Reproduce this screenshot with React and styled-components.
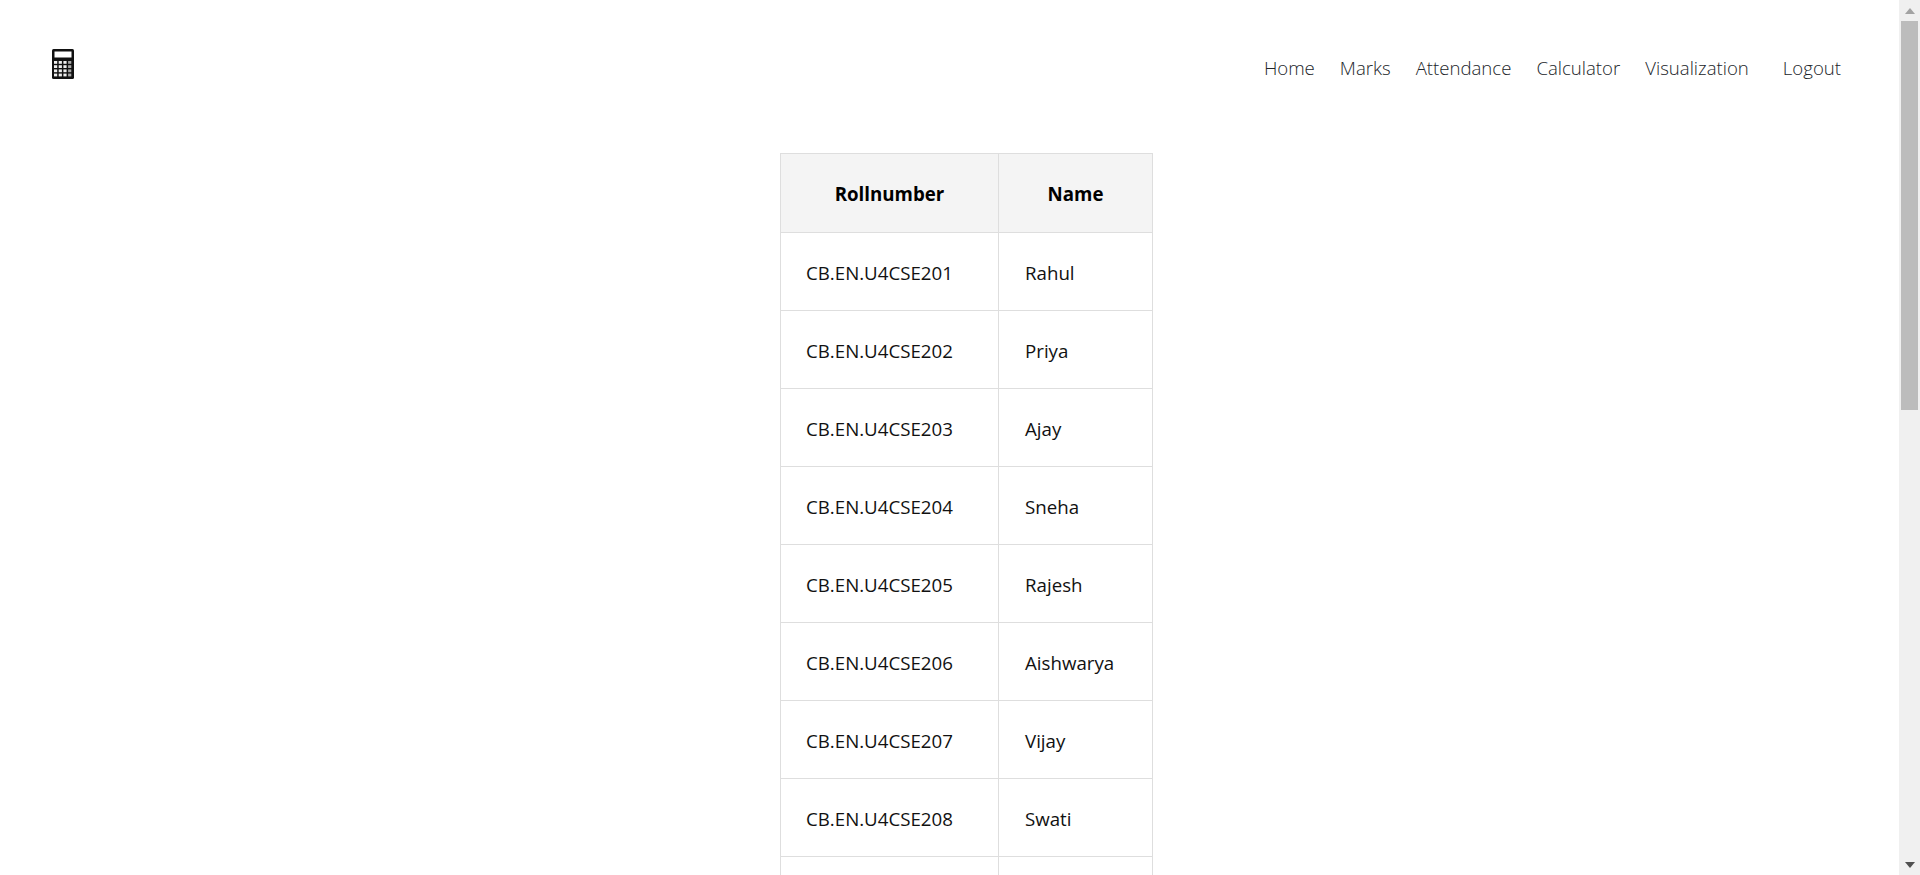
import React from "react";
import styled, { createGlobalStyle } from "styled-components";

const Global = createGlobalStyle`
  html { scrollbar-width: none; }
  html::-webkit-scrollbar { display: none; }
  body { margin: 0; background: #fff; font-family: "Open Sans", "Noto Sans", sans-serif; color: #212529; }
`;

const Page = styled.div`
  display: flex;
  flex-direction: column;
  padding-bottom: 91px;
`;

const Header = styled.header`
  display: flex;
  align-items: flex-start;
  justify-content: space-between;
  height: 153px;
  padding: 49px 79px 0 52px;
  box-sizing: border-box;
`;

const Nav = styled.nav`
  display: flex;
  align-items: center;
  height: 36px;
`;

const NavLink = styled.a`
  font-size: 18.6px;
  font-weight: 300;
  color: #212529;
  margin-left: ${(p) => p.$gap}px;
  white-space: nowrap;
`;

const Main = styled.main`
  display: flex;
  padding-left: 780px;
`;

const Table = styled.table`
  border-collapse: collapse;
  table-layout: fixed;
  width: 372px;
  font-size: 18.7px;
  color: #111;
`;

const Th = styled.th`
  width: ${(p) => p.$width}px;
  height: 79px;
  padding: 1px 0 0;
  border: 1px solid #dedede;
  background: #f4f4f4;
  color: #000;
  font-weight: 700;
  text-align: center;
  box-sizing: border-box;
`;

const Td = styled.td`
  height: 78px;
  padding: 2px 0 0 ${(p) => p.$inset}px;
  border: 1px solid #dedede;
  text-align: left;
  box-sizing: border-box;
  white-space: nowrap;
`;

const Scrollbar = styled.div`
  position: fixed;
  top: 0;
  right: 0;
  bottom: 0;
  width: 21px;
  display: flex;
  flex-direction: column;
  align-items: center;
  background: #f0f0f0;
`;

const ScrollButton = styled.div`
  width: 21px;
  height: 21px;
  flex: none;
  display: flex;
  align-items: center;
  justify-content: center;
`;

const Track = styled.div`
  flex: 1;
  width: 17px;
`;

const Thumb = styled.div`
  width: 17px;
  height: 389px;
  background: #bcbcbc;
`;

const Arrow = ({ down }) => (
  <svg width="10" height="6" viewBox="0 0 10 6" aria-hidden="true">
    <polygon points={down ? "0,0 10,0 5,6" : "0,6 10,6 5,0"} fill={down ? "#505050" : "#a3a3a3"} />
  </svg>
);

const Logo = () => (
  <svg width="22" height="30" viewBox="0 0 22 30" aria-hidden="true">
    <rect x="0" y="0" width="22" height="30" rx="1.5" fill="#111" />
    <rect x="2.5" y="2.5" width="17" height="6" fill="#fff" />
    {[0, 1, 2, 3].map((r) =>
      [0, 1, 2, 3].map((c) => (
        <rect key={`${r}-${c}`} x={2 + c * 4.7} y={12 + r * 4.2} width="3.2" height="2.8" fill={c === 3 ? "#aaa" : "#eee"} />
      ))
    )}
  </svg>
);

const links = [["Home", 0], ["Marks", 25], ["Attendance", 25], ["Calculator", 25], ["Visualization", 25], ["Logout", 34]];
const students = ["Rahul", "Priya", "Ajay", "Sneha", "Rajesh", "Aishwarya", "Vijay", "Swati", "Karthik", "Divya", "Arjun", "Meera", "Suresh", "Kavya", "Nikhil", "Anjali", "Varun", "Pooja", "Manoj", "Lakshmi"];

export default function App() {
  return (
    <Page>
      <Global />
      <Header>
        <Logo />
        <Nav>
          {links.map(([label, gap]) => (
            <NavLink key={label} $gap={gap}>{label}</NavLink>
          ))}
        </Nav>
      </Header>
      <Main>
        <Table>
          <thead>
            <tr><Th $width={218}>Rollnumber</Th><Th $width={154}>Name</Th></tr>
          </thead>
          <tbody>
            {students.map((name, i) => (
              <tr key={name}>
                <Td $inset={25}>CB.EN.U4CSE{201 + i}</Td>
                <Td $inset={26}>{name}</Td>
              </tr>
            ))}
          </tbody>
        </Table>
      </Main>
      <Scrollbar>
        <ScrollButton><Arrow /></ScrollButton>
        <Thumb />
        <Track />
        <ScrollButton><Arrow down /></ScrollButton>
      </Scrollbar>
    </Page>
  );
}
